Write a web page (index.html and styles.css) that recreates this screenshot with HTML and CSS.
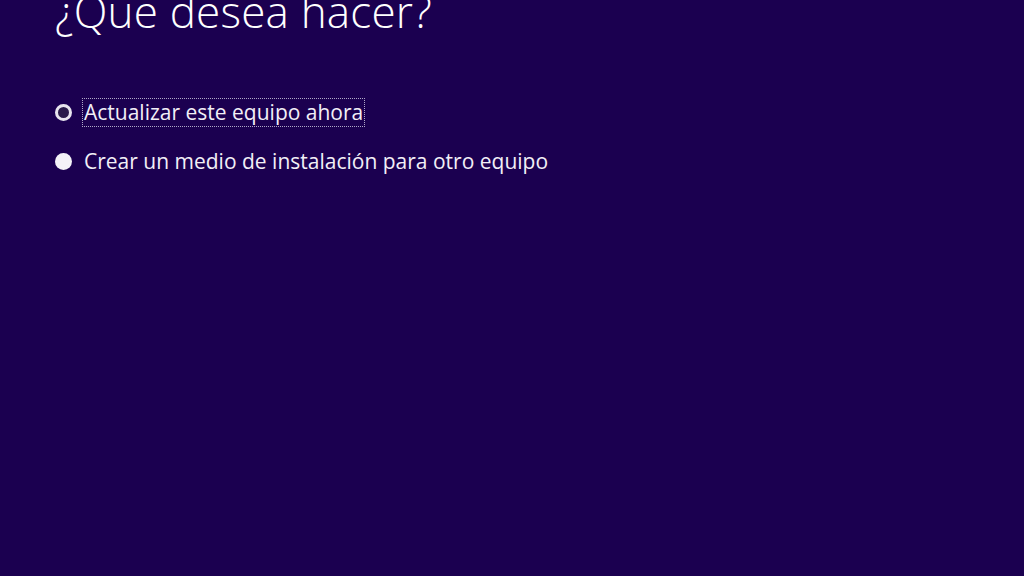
FILE: index.html
```html
<!DOCTYPE html>
<html lang="es">
<head>
<meta charset="utf-8">
<title>¿Que desea hacer?</title>
<link rel="stylesheet" href="styles.css">
</head>
<body>
<main class="page">
  <h1 class="title">¿Que desea hacer?</h1>
  <div class="options">
    <label class="option">
      <span class="radio radio-checked"></span>
      <span class="option-text focused">Actualizar este equipo ahora</span>
    </label>
    <label class="option">
      <span class="radio"></span>
      <span class="option-text">Crear un medio de instalación para otro equipo</span>
    </label>
  </div>
</main>
</body>
</html>
```
FILE: styles.css
```css
html, body {
  margin: 0;
  height: 100%;
}
body {
  background: #1b0050;
  color: #ffffff;
  font-family: "Open Sans", "Noto Sans", sans-serif;
  overflow: hidden;
}
.page {
  padding: 0 0 0 55px;
}
.title {
  margin: -17px 0 0 0;
  font-size: 44px;
  font-weight: 300;
  line-height: 56px;
  letter-spacing: 0.2px;
}
.options {
  display: flex;
  flex-direction: column;
  gap: 20px;
  margin-top: 59px;
}
.option {
  display: flex;
  align-items: center;
  gap: 10px;
  height: 29px;
}
.radio {
  box-sizing: border-box;
  width: 17px;
  height: 17px;
  border-radius: 50%;
  background: #f4f2f8;
  flex: none;
}
.radio-checked {
  border: 3px solid #e8e4ee;
  background: #2a1a4a;
}
.option-text {
  font-size: 21px;
  line-height: 27px;
  padding: 0 1px;
  border: 1px solid transparent;
  color: #f2eff7;
}
.focused {
  border: 1px dotted #b0a8c8;
}
```
